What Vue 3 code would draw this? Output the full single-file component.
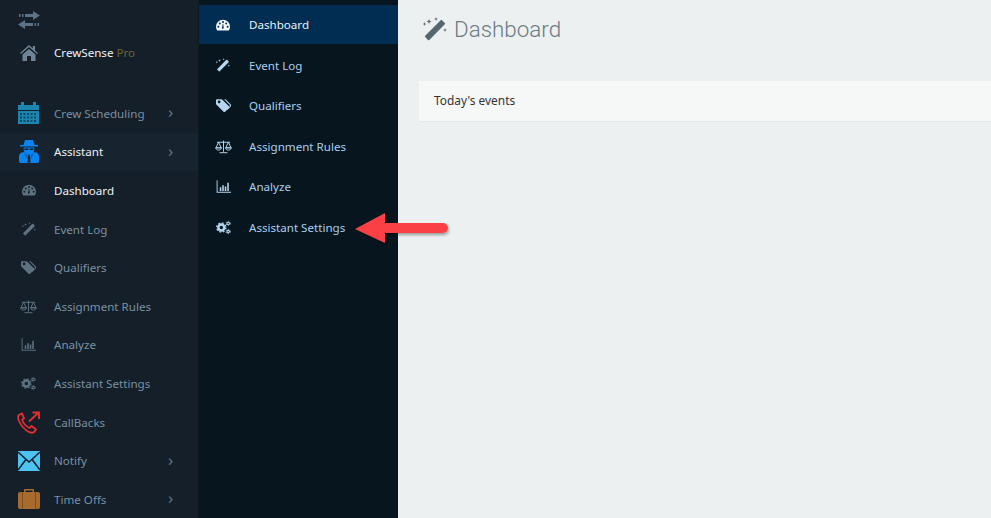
<template>
  <div class="page">
    <svg class="defs" width="0" height="0" aria-hidden="true">
      <symbol id="i-gauge" viewBox="0 0 24 24">
        <path fill-rule="evenodd" fill="currentColor" d="M12 3A12 12 0 0 0 0 15c0 2.200.5 4.100 1.700 5.800.3.400.6.700 1.100.7h18.400c.5 0 .8-.3 1.100-.7C23.500 19.100 24 17.200 24 15A12 12 0 0 0 12 3zM4 16.500a1.700 1.700 0 1 1 0-3.400 1.700 1.700 0 0 1 0 3.400zm2.500-5.400a1.700 1.700 0 1 1 0-3.400 1.700 1.700 0 0 1 0 3.400zM12 8.400a1.700 1.700 0 1 1 0-3.400 1.700 1.700 0 0 1 0 3.400zm1.200 7.500c.4.800.1 1.800-.7 2.200-.8.500-1.900.2-2.300-.7-.4-.8-.1-1.800.7-2.200l.5-5.200h.9l.9 5.900zm4.300-4.800a1.700 1.700 0 1 1 0-3.400 1.700 1.700 0 0 1 0 3.400zm2.500 5.400a1.700 1.700 0 1 1 0-3.400 1.700 1.700 0 0 1 0 3.400z"/>
      </symbol>
      <symbol id="i-wand" viewBox="0 0 24 24">
        <path fill="currentColor" d="M19 3.200l2.800 2.800c.4.400.4.900 0 1.300L6.300 22.900c-.4.400-.9.400-1.300 0l-2.800-2.800c-.4-.4-.4-.9 0-1.300L17.700 3.200c.4-.4.900-.4 1.300 0z"/>
        <path fill="currentColor" d="M6 2l.7 1.800 1.800.7-1.800.7L6 7l-.7-1.800-1.800-.7 1.800-.7zM13 0l.5 1.500 1.500.5-1.500.5L13 4l-.5-1.500L11 2l1.500-.5zM1.500 5L2 6.500l1.500.5L2 7.500 1.500 9 1 7.500-.5 7 1 6.500zM22 11l.5 1.500 1.500.5-1.500.5L22 15l-.5-1.500L20 13l1.500-.5z"/>
      </symbol>
      <symbol id="i-tag" viewBox="0 0 24 24">
        <path fill-rule="evenodd" fill="currentColor" d="M0 3.800C0 2.800.8 2 1.800 2h6.400c.8 0 1.500.3 2 .8l10.500 10.500c.7.700.7 1.900 0 2.600l-6.100 6.100c-.7.700-1.900.7-2.600 0L1.300 11.300A3 3 0 0 1 0 9zM5 8.500a2.200 2.200 0 1 0 0-4.400 2.200 2.200 0 0 0 0 4.400z"/>
        <path fill="currentColor" d="M13 2h1.500c.6 0 1.100.2 1.500.6l7.400 7.500c1 1 1 2.700 0 3.700l-5.400 5.400-1-1 4.700-4.800c.7-.7.7-1.900 0-2.600z"/>
      </symbol>
      <symbol id="i-scale" viewBox="0 0 26 24">
        <g fill="none" stroke="currentColor" stroke-width="1.500">
          <path d="M13 3v17M7 21.500h12M3 5.500h20"/>
          <path d="M5.500 5.500L1.500 14h8zM20.500 5.500L16.500 14h8z"/>
          <path d="M1 14c.5 2.500 2.500 3.500 4.500 3.500S9.500 16.500 10 14zM16 14c.5 2.500 2.500 3.500 4.500 3.500S24.500 16.500 25 14z"/>
        </g>
      </symbol>
      <symbol id="i-bars" viewBox="0 0 24 24">
        <path fill="currentColor" d="M1 2h1.500v18.500H24V22H1zM6 13h2.500v6H6zM10 10h2.500v9H10zM14 12h2.500v7H14zM18 6h2.500v13H18z"/>
      </symbol>
      <symbol id="i-cogs" viewBox="0 0 24 24">
        <g fill="none" stroke="currentColor">
          <circle cx="8.500" cy="12" r="4.800" stroke-width="4"/>
          <circle cx="8.500" cy="12" r="7.400" stroke-width="2" stroke-dasharray="3 2.810"/>
          <circle cx="19.500" cy="5.500" r="2" stroke-width="1.800"/>
          <circle cx="19.500" cy="5.500" r="3.500" stroke-width="1.300" stroke-dasharray="1.800 1.870"/>
          <circle cx="19.500" cy="18.500" r="2" stroke-width="1.800"/>
          <circle cx="19.500" cy="18.500" r="3.500" stroke-width="1.300" stroke-dasharray="1.800 1.870"/>
        </g>
      </symbol>
    </svg>

    <aside class="sidebar">
      <div class="swap">
        <svg viewBox="0 0 22 18" width="22" height="18">
          <path fill="#5c7286" d="M15 0l7 4.500L15 9V6H7V3h8zM7 9v3h8v3H7v3l-7-4.500z"/>
          <path fill="#5c7286" d="M1 3h1.500v3H1zM4 3h1.500v3H4zM16.500 12H18v3h-1.500zM19.500 12H21v3h-1.500z"/>
        </svg>
      </div>
      <div class="brand">
        <span class="side-icon">
          <svg viewBox="0 0 18 16" width="18" height="16">
            <path fill="#6f8597" d="M9 0L0 8l.8 1L9 2l8.200 7 .8-1-3-2.600V1h-2.200v2.500zM2.500 9.500V16H7v-5h4v5h4.500V9.500L9 4z"/>
          </svg>
        </span>
        <span class="brand-name">CrewSense <em>Pro</em></span>
      </div>

      <ul class="side-list">
        <li class="side-row">
          <span class="side-icon">
            <svg viewBox="0 0 21 22" width="21" height="22">
              <path fill="#1b86ae" d="M0 3h3V0h3v3h9V0h3v3h3v5H0zM0 9h21v13H0z"/>
              <path fill="#0f4a66" d="M2 11h2v2H2zM5.500 11h2v2h-2zM9 11h2v2H9zM12.500 11h2v2h-2zM16 11h2v2h-2zM2 14.500h2v2H2zM5.500 14.500h2v2h-2zM9 14.500h2v2H9zM12.500 14.500h2v2h-2zM16 14.500h2v2h-2zM2 18h2v2H2zM5.500 18h2v2h-2zM9 18h2v2H9zM12.500 18h2v2h-2zM16 18h2v2h-2z"/>
            </svg>
          </span>
          <span class="side-label">Crew Scheduling</span>
          <span class="chev">›</span>
        </li>
        <li class="side-row active">
          <span class="side-icon">
            <svg viewBox="0 0 20 23" width="20" height="23">
              <path fill="#0a84f0" d="M6 0h8l1.500 5H19v1.500H1V5h3.500zM5 7.500h10c.5 1 .5 2.500 0 3.500-.2.600-.6 1-1 1.300h2.500c2.300.4 3.500 2 3.500 4.200v4.500c0 1-.8 2-2 2H2c-1.200 0-2-1-2-2v-4.500c0-2.200 1.200-3.800 3.500-4.200H6c-.4-.3-.8-.7-1-1.300-.5-1-.5-2.500 0-3.500z"/>
              <path fill="#10202c" d="M5.500 8.500h3.800v1.500H5.500zM10.700 8.500h3.800v1.500h-3.800zM9.400 14.500h1.200l1 8H8.400z"/>
              <path fill="#0664b8" d="M5.500 13.500h2L9 18l-1 1.500zM14.500 13.500h-2L11 18l1 1.500z"/>
            </svg>
          </span>
          <span class="side-label">Assistant</span>
          <span class="chev">›</span>
        </li>
        <li v-for="item in subItems" :key="item.label" class="side-row" :class="{ current: item.label === 'Dashboard' }">
          <span class="side-icon">
            <svg class="sub-icon" :width="item.size" :height="item.size"><use :href="'#i-' + item.icon" /></svg>
          </span>
          <span class="side-label">{{ item.label }}</span>
        </li>
        <li class="side-row">
          <span class="side-icon">
            <svg viewBox="0 0 23 23" width="23" height="23" fill="none" stroke="#e62e33" stroke-width="1.800">
              <path d="M5 2.500L2 4c-1.300 1-1.300 3 0 6 2 4.500 5 8 9 10.500 2.500 1.500 4.500 1.700 6 .5l2-2.500-4.500-3.500-2 2c-3.500-1.500-6-4.500-7.500-8l2-1.800z"/>
              <path d="M12 10.500L21 2M15.500 1.500H22v6.500"/>
            </svg>
          </span>
          <span class="side-label">CallBacks</span>
        </li>
        <li class="side-row">
          <span class="side-icon">
            <svg viewBox="0 0 22 20" width="22" height="20">
              <path fill="#4cc3f0" d="M0 0h22v20H0z"/>
              <path fill="none" stroke="#10202c" stroke-width="1.600" d="M0 1l11 10L22 1M0 19l7.500-10M22 19l-7.500-10"/>
            </svg>
          </span>
          <span class="side-label">Notify</span>
          <span class="chev">›</span>
        </li>
        <li class="side-row">
          <span class="side-icon">
            <svg viewBox="0 0 22 20" width="22" height="20">
              <path fill="#a66b2d" d="M7 0h8c.6 0 1 .4 1 1v2h4c1.200 0 2 .8 2 2v13c0 1.200-.8 2-2 2H2c-1.200 0-2-.8-2-2V5c0-1.200.8-2 2-2h4V1c0-.6.4-1 1-1z"/>
              <path fill="#141f29" d="M7.500 1.500h7V3h-7z"/>
              <path fill="#7d4f20" d="M4 3h1v17H4zM17 3h1v17h-1z"/>
            </svg>
          </span>
          <span class="side-label">Time Offs</span>
          <span class="chev">›</span>
        </li>
      </ul>
    </aside>

    <nav class="subnav">
      <div v-for="item in subItems" :key="item.label" class="sub-row" :class="{ selected: item.label === 'Dashboard' }">
        <span class="sub-icon-wrap">
          <svg :width="item.size" :height="item.size"><use :href="'#i-' + item.icon" /></svg>
        </span>
        <span>{{ item.label }}</span>
      </div>
    </nav>

    <main class="content">
      <header class="content-header">
        <svg width="24" height="24"><use href="#i-wand" /></svg>
        <h1>Dashboard</h1>
      </header>
      <div class="card">Today's events</div>
    </main>

    <svg class="pointer" viewBox="0 0 100 36" width="100" height="36">
      <defs>
        <filter id="arrow-shadow" x="-10%" y="-20%" width="125%" height="150%">
          <feDropShadow dx="1" dy="2" stdDeviation="1.500" flood-color="#000" flood-opacity="0.35" />
        </filter>
      </defs>
      <path filter="url(#arrow-shadow)" fill="#fb4044" d="M1 17L31 1v10h58a5 5 0 0 1 0 10H31v10z" />
    </svg>
  </div>
</template>

<script setup>
const subItems = [
  { label: "Dashboard", icon: "gauge", size: 14 },
  { label: "Event Log", icon: "wand", size: 14 },
  { label: "Qualifiers", icon: "tag", size: 15 },
  { label: "Assignment Rules", icon: "scale", size: 17 },
  { label: "Analyze", icon: "bars", size: 15 },
  { label: "Assistant Settings", icon: "cogs", size: 15 },
];
</script>

<style>
html,
body {
  margin: 0;
  overflow: hidden;
}
</style>

<style scoped>
.page {
  position: relative;
  display: flex;
  width: 991px;
  height: 518px;
  overflow: hidden;
  background: #0c1a24;
  font-family: "Noto Sans", "Liberation Sans", sans-serif;
  font-size: 11.6px;
}

.defs {
  position: absolute;
}

.sidebar {
  width: 198px;
  flex-shrink: 0;
  background: #141f29;
  color: #7a90a1;
}

.swap {
  height: 37px;
  padding: 11px 0 0 18px;
  box-sizing: border-box;
}

.brand {
  display: flex;
  align-items: center;
  height: 32px;
  color: #eef2f5;
}

.brand-name {
  margin-bottom: 2px;
}

.brand-name em {
  font-style: normal;
  color: #6e6236;
}

.side-list {
  list-style: none;
  margin: 25px 0 0;
  padding: 0;
}

.side-row {
  display: flex;
  align-items: center;
  height: 38.6px;
}

.side-row.active {
  background: #17232e;
  color: #eef2f5;
}

.side-row.current {
  color: #eef2f5;
}

.side-icon {
  width: 54px;
  height: 100%;
  flex-shrink: 0;
  box-sizing: border-box;
  padding-left: 3px;
  display: flex;
  align-items: center;
  justify-content: center;
}

.sub-icon {
  color: #5d7280;
}

.side-label {
  flex: 1;
}

.chev {
  width: 30px;
  color: #5f7586;
  font-size: 17px;
  line-height: 1;
  margin-top: -3px;
}

.subnav {
  width: 199px;
  margin-left: 1px;
  flex-shrink: 0;
  box-sizing: border-box;
  padding-top: 5px;
  background: #07151f;
  color: #a9d0f0;
}

.sub-row {
  display: flex;
  align-items: center;
  height: 39px;
  margin-bottom: 1.6px;
}

.sub-row.selected {
  background: #022d52;
  color: #e8f2fa;
}

.sub-icon-wrap {
  width: 50px;
  padding-right: 2px;
  box-sizing: border-box;
  display: flex;
  justify-content: center;
  color: #b5d6ee;
}

.sub-row.selected .sub-icon-wrap {
  color: #f2f7fb;
}

.content {
  flex: 1;
  background: #edf0f1;
  padding-left: 21px;
  min-width: 0;
}

.content-header {
  display: flex;
  align-items: center;
  gap: 7px;
  height: 58px;
  padding-left: 4px;
  color: #56666f;
}

.content-header h1 {
  margin: 0;
  font-family: Roboto, sans-serif;
  font-size: 22.4px;
  font-weight: 300;
  color: #6b7a84;
}

.card {
  margin-top: 23px;
  height: 41px;
  line-height: 38px;
  padding-left: 15px;
  box-sizing: border-box;
  background: #f6f8f8;
  border-bottom: 1px solid #e5e8e8;
  color: #333;
  font-size: 11.9px;
}

.pointer {
  position: absolute;
  left: 354px;
  top: 212px;
}
</style>
